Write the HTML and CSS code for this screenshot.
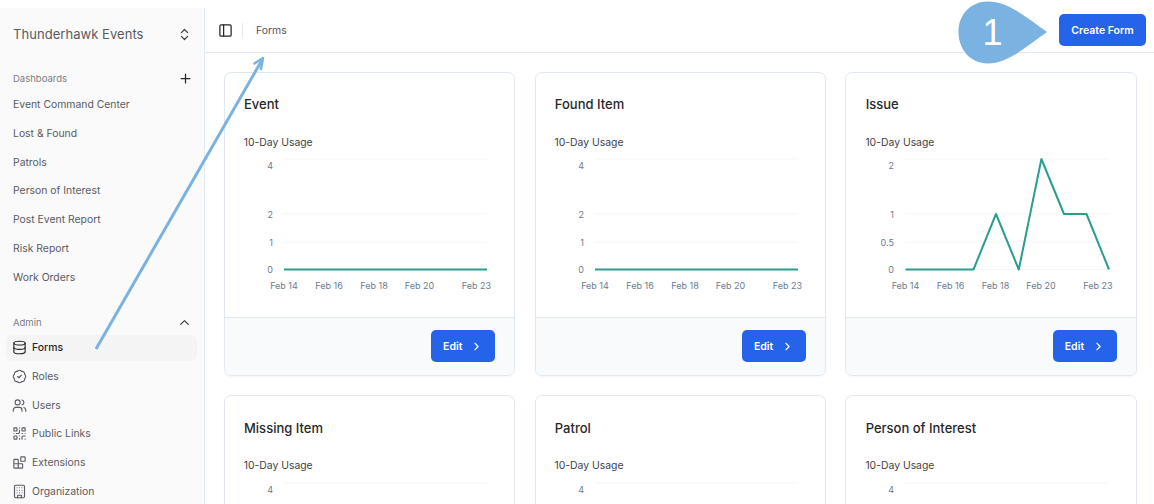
FILE: index.html
```html
<!DOCTYPE html>
<html lang="en">
<head>
  <meta charset="UTF-8" />
  <title>Forms</title>
  <link rel="stylesheet" href="styles.css">
</head>
<body>
  <svg class="defs" width="0" height="0">
    <symbol id="i-updown" viewBox="0 0 24 24"><path d="m7 15 5 5 5-5M7 9l5-5 5 5"/></symbol>
    <symbol id="i-plus" viewBox="0 0 24 24"><path d="M5 12h14M12 5v14"/></symbol>
    <symbol id="i-up" viewBox="0 0 24 24"><path d="m18 15-6-6-6 6"/></symbol>
    <symbol id="i-right" viewBox="0 0 24 24"><path d="m9 18 6-6-6-6"/></symbol>
    <symbol id="i-panel" viewBox="0 0 24 24"><rect x="3" y="3" width="18" height="18" rx="2"/><path d="M9 3v18"/></symbol>
    <symbol id="i-db" viewBox="0 0 24 24"><ellipse cx="12" cy="5" rx="9" ry="3"/><path d="M3 5v14a9 3 0 0 0 18 0V5"/><path d="M3 12a9 3 0 0 0 18 0"/></symbol>
    <symbol id="i-badge" viewBox="0 0 24 24"><path d="M3.85 8.62a4 4 0 0 1 4.78-4.77 4 4 0 0 1 6.74 0 4 4 0 0 1 4.78 4.78 4 4 0 0 1 0 6.74 4 4 0 0 1-4.77 4.78 4 4 0 0 1-6.75 0 4 4 0 0 1-4.78-4.77 4 4 0 0 1 0-6.76Z"/><path d="m9 12 2 2 4-4"/></symbol>
    <symbol id="i-users" viewBox="0 0 24 24"><path d="M16 21v-2a4 4 0 0 0-4-4H6a4 4 0 0 0-4 4v2"/><circle cx="9" cy="7" r="4"/><path d="M22 21v-2a4 4 0 0 0-3-3.87M16 3.13a4 4 0 0 1 0 7.75"/></symbol>
    <symbol id="i-qr" viewBox="0 0 24 24"><rect x="3" y="3" width="5" height="5" rx="1"/><rect x="16" y="3" width="5" height="5" rx="1"/><rect x="3" y="16" width="5" height="5" rx="1"/><path d="M21 16h-3a2 2 0 0 0-2 2v3M21 21v.01M12 7v3a2 2 0 0 1-2 2H7M3 12h.01M12 3h.01M12 16v.01M16 12h1M21 12v.01M12 21v-1"/></symbol>
    <symbol id="i-blocks" viewBox="0 0 24 24"><rect x="14" y="3" width="7" height="7" rx="1"/><path d="M10 21V8a1 1 0 0 0-1-1H4a1 1 0 0 0-1 1v12a1 1 0 0 0 1 1h12a1 1 0 0 0 1-1v-5a1 1 0 0 0-1-1H3"/></symbol>
    <symbol id="i-building" viewBox="0 0 24 24"><rect x="4" y="2" width="16" height="20" rx="2"/><path d="M9 22v-4h6v4M8 6h.01M16 6h.01M12 6h.01M12 10h.01M12 14h.01M16 10h.01M16 14h.01M8 10h.01M8 14h.01"/></symbol>
  </svg>

  <div class="app">
    <aside class="sidebar">
      <div class="brand">
        <span>Thunderhawk Events</span>
        <svg class="icon"><use href="#i-updown"/></svg>
      </div>

      <div class="side-title side-title-first">
        <span>Dashboards</span>
        <svg class="icon icon-dark icon-plus"><use href="#i-plus"/></svg>
      </div>
      <a class="side-link">Event Command Center</a>
      <a class="side-link">Lost &amp; Found</a>
      <a class="side-link">Patrols</a>
      <a class="side-link">Person of Interest</a>
      <a class="side-link">Post Event Report</a>
      <a class="side-link">Risk Report</a>
      <a class="side-link">Work Orders</a>

      <div class="side-title side-title-admin">
        <span>Admin</span>
        <svg class="icon"><use href="#i-up"/></svg>
      </div>
      <a class="side-link side-icon active"><svg class="icon"><use href="#i-db"/></svg>Forms</a>
      <a class="side-link side-icon"><svg class="icon"><use href="#i-badge"/></svg>Roles</a>
      <a class="side-link side-icon"><svg class="icon"><use href="#i-users"/></svg>Users</a>
      <a class="side-link side-icon"><svg class="icon"><use href="#i-qr"/></svg>Public Links</a>
      <a class="side-link side-icon"><svg class="icon"><use href="#i-blocks"/></svg>Extensions</a>
      <a class="side-link side-icon"><svg class="icon"><use href="#i-building"/></svg>Organization</a>
    </aside>

    <main class="main">
      <header class="topbar">
        <svg class="icon icon-dark icon-panel"><use href="#i-panel"/></svg>
        <span class="divider"></span>
        <span class="crumb">Forms</span>
        <button class="btn btn-create">Create Form</button>
      </header>

      <div class="grid">

        <section class="card">
          <div class="card-body">
            <h3>Event</h3>
            <h4>10-Day Usage</h4>
            <svg class="chart" width="251" height="150">
              <path class="grid-line" d="M40 9H243M40 64H243M40 92H243M40 119.5H243"/>
              <text class="tick" x="29" y="19">4</text>
              <text class="tick" x="29" y="68">2</text>
              <text class="tick" x="29" y="96">1</text>
              <text class="tick" x="29" y="123">0</text>
              <text class="tick mid" x="40" y="139">Feb 14</text>
              <text class="tick mid" x="85" y="139">Feb 16</text>
              <text class="tick mid" x="130" y="139">Feb 18</text>
              <text class="tick mid" x="175.500" y="139">Feb 20</text>
              <text class="tick" x="247" y="139">Feb 23</text>
              <path class="line" d="M40 119.5H243"/>
            </svg>
          </div>
          <div class="card-foot">
            <button class="btn btn-edit">Edit<svg class="icon"><use href="#i-right"/></svg></button>
          </div>
        </section>

        <section class="card">
          <div class="card-body">
            <h3>Found Item</h3>
            <h4>10-Day Usage</h4>
            <svg class="chart" width="251" height="150">
              <path class="grid-line" d="M40 9H243M40 64H243M40 92H243M40 119.5H243"/>
              <text class="tick" x="29" y="19">4</text>
              <text class="tick" x="29" y="68">2</text>
              <text class="tick" x="29" y="96">1</text>
              <text class="tick" x="29" y="123">0</text>
              <text class="tick mid" x="40" y="139">Feb 14</text>
              <text class="tick mid" x="85" y="139">Feb 16</text>
              <text class="tick mid" x="130" y="139">Feb 18</text>
              <text class="tick mid" x="175.500" y="139">Feb 20</text>
              <text class="tick" x="247" y="139">Feb 23</text>
              <path class="line" d="M40 119.5H243"/>
            </svg>
          </div>
          <div class="card-foot">
            <button class="btn btn-edit">Edit<svg class="icon"><use href="#i-right"/></svg></button>
          </div>
        </section>

        <section class="card">
          <div class="card-body">
            <h3>Issue</h3>
            <h4>10-Day Usage</h4>
            <svg class="chart" width="251" height="150">
              <path class="grid-line" d="M40 9H243M40 64H243M40 92H243M40 119.5H243"/>
              <text class="tick" x="29" y="19">2</text>
              <text class="tick" x="29" y="68">1</text>
              <text class="tick" x="29" y="96">0.5</text>
              <text class="tick" x="29" y="123">0</text>
              <text class="tick mid" x="40.500" y="139">Feb 14</text>
              <text class="tick mid" x="85.500" y="139">Feb 16</text>
              <text class="tick mid" x="130.500" y="139">Feb 18</text>
              <text class="tick mid" x="176" y="139">Feb 20</text>
              <text class="tick" x="247.500" y="139">Feb 23</text>
              <path class="line" d="M40.500 119.5H108.500L131 64 153.800 119.500 176.400 9 199 64H221.500L244 119.500"/>
            </svg>
          </div>
          <div class="card-foot">
            <button class="btn btn-edit">Edit<svg class="icon"><use href="#i-right"/></svg></button>
          </div>
        </section>

        <section class="card">
          <div class="card-body">
            <h3>Missing Item</h3>
            <h4>10-Day Usage</h4>
            <svg class="chart" width="251" height="150">
              <path class="grid-line" d="M40 9H243"/>
              <text class="tick" x="29" y="19">4</text>
            </svg>
          </div>
        </section>

        <section class="card">
          <div class="card-body">
            <h3>Patrol</h3>
            <h4>10-Day Usage</h4>
            <svg class="chart" width="251" height="150">
              <path class="grid-line" d="M40 9H243"/>
              <text class="tick" x="29" y="19">4</text>
            </svg>
          </div>
        </section>

        <section class="card">
          <div class="card-body">
            <h3>Person of Interest</h3>
            <h4>10-Day Usage</h4>
            <svg class="chart" width="251" height="150">
              <path class="grid-line" d="M40 9H243"/>
              <text class="tick" x="29" y="19">4</text>
            </svg>
          </div>
        </section>

      </div>
    </main>
  </div>

  <!-- annotation drawn over the page -->
  <svg class="overlay" width="1154" height="504">
    <path class="arrow-line" d="M96 349 262 60"/>
    <path class="arrow-head" d="M254.500 63.500 263 58 261 69"/>
    <path class="bubble" d="M988 1.500C1008 1.500 1026 17 1047 32 1026 47 1008 63 988 63.500 970 63.500 958.500 49 958.500 32 958.500 15 970 1.500 988 1.500Z"/>
    <text class="bubble-num" x="992.500" y="45">1</text>
  </svg>
</body>
</html>
```

FILE: styles.css
```css
* { box-sizing: border-box; }
html, body { height: 100%; }
body {
  margin: 0;
  overflow: hidden;
  background: #fff;
  font-family: Inter, "Noto Sans", sans-serif;
  font-size: 10.4px;
  color: #52525b;
}
.defs { position: absolute; }

.app { display: flex; height: 504px; overflow: hidden; }

/* sidebar */
.sidebar {
  flex: 0 0 205px;
  margin-top: 8px;
  padding: 0 7px 0 6px;
  background: #fafafa;
  border-right: 1px solid #e2e8f0;
}
.brand {
  display: flex;
  justify-content: space-between;
  align-items: center;
  height: 52px;
  padding: 0 5px 0 7px;
  font-size: 13px;
  letter-spacing: 0.05px;
  color: #5a5a62;
}
.side-title {
  display: flex;
  justify-content: space-between;
  align-items: center;
  padding: 0 5px 0 7px;
  height: 20px;
  font-size: 9.5px;
  color: #7c7c85;
}
.side-title-first { margin-top: 8px; margin-bottom: 3.7px; }
.side-title-admin { margin-top: 22.1px; margin-bottom: 2.3px; }
.side-link {
  display: flex;
  align-items: center;
  gap: 5px;
  height: 26px;
  margin-bottom: 2.75px;
  padding-left: 7px;
  border-radius: 6px;
  color: #5a5a62;
}
.side-link.side-icon { padding-left: 6px; }
.side-link.active { background: #f4f4f5; color: #27272a; font-weight: 500; }
.side-icon .icon { stroke: #5a5a62; stroke-width: 1.8; }
.side-link.active .icon { stroke: #27272a; }

.icon {
  width: 15px;
  height: 15px;
  flex: none;
  fill: none;
  stroke: #3f3f46;
  stroke-width: 2;
  stroke-linecap: round;
  stroke-linejoin: round;
}
.icon-dark { stroke: #27272a; }
.side-title .icon-plus { margin-right: -1px; }

/* main */
.main { flex: 1; min-width: 0; }
.topbar {
  display: flex;
  align-items: center;
  height: 53px;
  padding: 8px 8px 0 13px;
  border-bottom: 1px solid #e2e8f0;
}
.divider { width: 1px; height: 14px; margin: 0 13px 0 9px; background: #e2e8f0; }

.btn {
  border: 0;
  border-radius: 5px;
  background: #2563eb;
  color: #fff;
  font-family: inherit;
  font-size: 10.5px;
  font-weight: 600;
}
.btn-create { margin-left: auto; width: 87px; height: 32px; }
.btn-edit {
  display: flex;
  align-items: center;
  justify-content: center;
  gap: 8px;
  width: 64px;
  height: 32px;
}
.btn-edit .icon { width: 13px; height: 13px; stroke: #fff; }

.grid {
  display: grid;
  grid-template-columns: repeat(3, 1fr);
  gap: 19.45px 19.3px;
  padding: 19px 17.05px 0 18.7px;
}
.card {
  height: 304px;
  border: 1px solid #e2e8f0;
  border-radius: 7px;
  overflow: hidden;
  box-shadow: 0 1px 2px rgba(15, 23, 42, 0.04);
  display: flex;
  flex-direction: column;
}
.card-body { flex: 1; padding: 0 19px; }
.card h3 {
  margin: 22px 0 0 0.3px;
  font-size: 13px;
  line-height: 18px;
  font-weight: 500;
  color: #27272a;
}
.card h4 {
  margin: 22px 0 0;
  font-size: 10.4px;
  line-height: 16px;
  font-weight: 400;
  color: #3f3f46;
}
.card:nth-child(n+4) h3 { margin-top: 23px; }
.card:nth-child(n+4) h4 { margin-top: 21px; }
.card:nth-child(n+4) .chart { margin-top: 0; }
.chart { display: block; margin-top: -1px; overflow: visible; }
.grid-line { fill: none; stroke: #f4f5f7; stroke-width: 1; }
.line { fill: none; stroke: #2a9d8f; stroke-width: 2; stroke-linejoin: round; }
.tick {
  font-size: 9px;
  fill: #6b7a90;
  text-anchor: end;
}
.tick.mid { text-anchor: middle; }
.card-foot {
  display: flex;
  justify-content: flex-end;
  align-items: center;
  flex: 0 0 58px;
  padding: 0 19px 1px 0;
  background: #f8fafc;
  border-top: 1px solid #e2e8f0;
}

/* annotation */
.overlay { position: absolute; left: 0; top: 0; pointer-events: none; }
.arrow-line { stroke: #7ab3e2; stroke-width: 3; fill: none; }
.arrow-head { fill: none; stroke: #7ab3e2; stroke-width: 2.5; stroke-linecap: round; stroke-linejoin: round; }
.bubble { fill: #7ab3e2; }
.bubble-num { fill: #fff; font-size: 36px; text-anchor: middle; font-family: "Liberation Sans", sans-serif; }
```
